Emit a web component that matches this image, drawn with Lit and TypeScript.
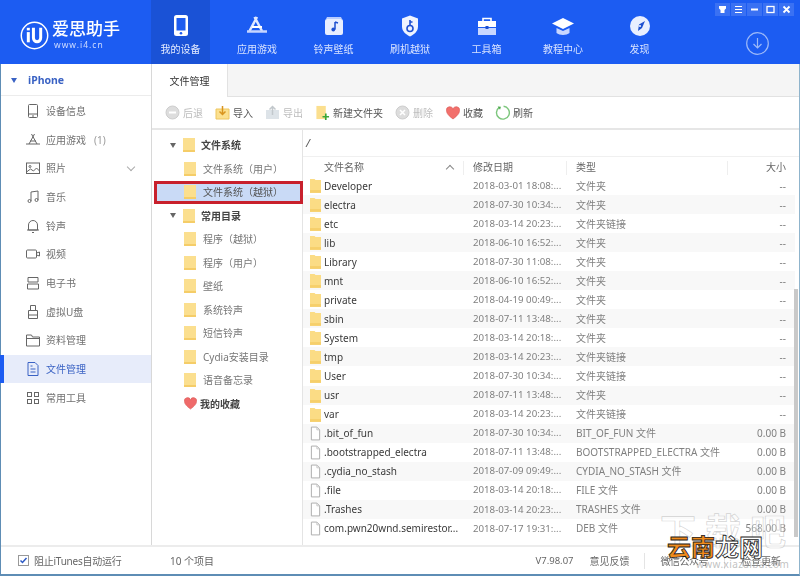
import { LitElement, html, css, svg } from "lit";
import { customElement } from "lit/decorators.js";

const folder = html`<svg class="fi" viewBox="0 0 12 16"><path d="M0 1h5l1 1h6v14H0z" fill="#fbdc85"/><path d="M0 13h12v3H0z" fill="#f6cf6b"/></svg>`;
const folderB = html`<svg class="tf" viewBox="0 0 12 14"><rect width="12" height="14" fill="#fbdf8f"/><rect y="12" width="12" height="2" fill="#f5cd68"/></svg>`;
const fileI = html`<svg class="fi" viewBox="0 0 12 16"><path d="M1.500 1h6l3 3v11h-9z" fill="#fff" stroke="#a9a9a9"/><path d="M7.500 1v3h3" fill="none" stroke="#c4c4c4"/></svg>`;
const heart = (c: string, w = 14) => html`<svg width=${w} height=${w} viewBox="0 0 14 14"><path d="M7 13C3 10 .5 7.600 .5 4.700A3.300 3.300 0 0 1 7 3.300a3.300 3.300 0 0 1 6.500 1.400C13.500 7.600 11 10 7 13z" fill=${c} stroke="#d9534f" stroke-width=".6"/></svg>`;

const navIcons: Record<string, unknown> = {
  phone: svg`<rect x="6" y="1" width="14" height="21" rx="2.500" fill="#fff"/><rect x="8.500" y="4" width="9" height="12.500" fill="#1d5cf0"/><circle cx="13" cy="19.200" r="1.300" fill="#1d5cf0"/>`,
  app: svg`<path d="M13 3l-7.500 14M10.500 3l7.500 14" stroke="#dfe8ff" stroke-width="2.500" fill="none"/><path d="M3 17.500h20" stroke="#c6d5ff" stroke-width="2.500"/><path d="M8 13h10" stroke="#fff" stroke-width="2"/>`,
  music: svg`<path d="M6 3h14l1 2H5z" fill="#b9ccff"/><rect x="4" y="5" width="18" height="16" rx="2" fill="#e8eeff"/><path d="M14 8v7.500M14 8l3 1" stroke="#1d4fd0" stroke-width="1.500" fill="none"/><circle cx="12.300" cy="15.500" r="1.900" fill="#1d4fd0"/>`,
  shield: svg`<path d="M13 1.500l8 3v8c0 5-4 8-8 10-4-2-8-5-8-10v-8z" fill="#eef3ff"/><circle cx="13" cy="14.500" r="3" fill="none" stroke="#1d4fd0" stroke-width="1.600"/><path d="M13 11.500V6M13 8h2.500" stroke="#1d4fd0" stroke-width="1.600"/>`,
  box: svg`<path d="M9 7V4.500h8V7" fill="none" stroke="#fff" stroke-width="1.600"/><path d="M4 7h18v6H4z" fill="#fff"/><path d="M4 14h18v7H4z" fill="#c8d7ff"/><rect x="11.500" y="12" width="3" height="3" fill="#1d4fd0"/>`,
  hat: svg`<path d="M13 4L2 9.500 13 15l11-5.500z" fill="#fff"/><path d="M6.500 14v5c3 2.500 10 2.500 13 0v-5L13 17z" fill="#c8d7ff"/>`,
  compass: svg`<circle cx="13" cy="12" r="10" fill="#e9efff"/><path d="M18 7l-3 7-4 3 1-6.500z" fill="#1d4fd0"/><circle cx="13" cy="12" r="1.100" fill="#e9efff"/>`,
};
const nav = [
  ["phone", "我的设备"], ["app", "应用游戏"], ["music", "铃声壁纸"], ["shield", "刷机越狱"],
  ["box", "工具箱"], ["hat", "教程中心"], ["compass", "发现"],
];

const g = (s: unknown) => html`<svg class="si" viewBox="0 0 16 16" fill="none" stroke="currentColor" stroke-width="1">${s}</svg>`;
const side: [string, unknown, string?][] = [
  ["设备信息", g(svg`<rect x="3.500" y="1.500" width="9" height="13" rx="1"/><path d="M3.500 11h9M7 13h2"/>`)],
  ["应用游戏", g(svg`<path d="M9.500 2L4 12M6.500 2L12 12M1 12h14M5 9h6"/>`), "(1)"],
  ["照片", g(svg`<rect x="1.500" y="3" width="13" height="10.500"/><circle cx="5" cy="6.500" r="1"/><path d="M1.500 12l4-3 3 2 3-3 3 3"/>`)],
  ["音乐", g(svg`<path d="M6 12V3l7-1v9"/><circle cx="4.500" cy="12" r="1.500"/><circle cx="11.500" cy="11" r="1.500"/>`)],
  ["铃声", g(svg`<path d="M3.500 12V7a4.500 4.500 0 0 1 9 0v5zM2 12h12M7 14.500h2"/>`)],
  ["视频", g(svg`<rect x="1.500" y="4" width="10" height="8" rx="1"/><path d="M11.500 7l3-1v4l-3-1"/>`)],
  ["电子书", g(svg`<path d="M3 2.500h10v4.500H3zM2.500 9h11v5h-11z"/>`)],
  ["虚拟U盘", g(svg`<path d="M5.500 1.500h5v5h-5zM3.500 6.500h9v8h-9zM3.500 11h9"/>`)],
  ["资料管理", g(svg`<path d="M1.500 3h5l1 2h7v9h-13zM1.500 6.500h13"/>`)],
  ["文件管理", g(svg`<path d="M3 1.500h7l3 3v10H3zM5.500 8h5M5.500 11h5M5.500 5h2"/>`)],
  ["常用工具", g(svg`<rect x="2.500" y="2.500" width="4" height="4"/><rect x="9.500" y="2.500" width="4" height="4"/><rect x="2.500" y="9.500" width="4" height="4"/><rect x="9.500" y="9.500" width="4" height="4"/>`)],
];

const tree: [string, number, boolean?][] = [
  ["文件系统", 0, true], ["文件系统（用户）", 1], ["文件系统（越狱）", 2], ["常用目录", 0, true],
  ["程序（越狱）", 1], ["程序（用户）", 1], ["壁纸", 1], ["系统铃声", 1], ["短信铃声", 1],
  ["Cydia安装目录", 1], ["语音备忘录", 1],
];

const rows: [string, string, string, string, boolean][] = [
  ["Developer", "2018-03-01 18:08:...", "文件夹", "--", true],
  ["electra", "2018-07-30 10:34:...", "文件夹", "--", true],
  ["etc", "2018-03-14 20:23:...", "文件夹链接", "--", true],
  ["lib", "2018-06-10 16:52:...", "文件夹", "--", true],
  ["Library", "2018-07-30 11:08:...", "文件夹", "--", true],
  ["mnt", "2018-06-10 16:52:...", "文件夹", "--", true],
  ["private", "2018-04-19 00:49:...", "文件夹", "--", true],
  ["sbin", "2018-07-11 13:48:...", "文件夹", "--", true],
  ["System", "2018-03-14 20:18:...", "文件夹", "--", true],
  ["tmp", "2018-03-14 20:23:...", "文件夹链接", "--", true],
  ["User", "2018-07-30 10:34:...", "文件夹链接", "--", true],
  ["usr", "2018-07-11 13:48:...", "文件夹", "--", true],
  ["var", "2018-03-14 20:23:...", "文件夹链接", "--", true],
  [".bit_of_fun", "2018-07-30 10:34:...", "BIT_OF_FUN 文件", "0.00 B", false],
  [".bootstrapped_electra", "2018-07-11 13:48:...", "BOOTSTRAPPED_ELECTRA 文件", "0.00 B", false],
  [".cydia_no_stash", "2018-07-09 09:49:...", "CYDIA_NO_STASH 文件", "0.00 B", false],
  [".file", "2018-03-14 20:18:...", "FILE 文件", "0.00 B", false],
  [".Trashes", "2018-03-14 20:23:...", "TRASHES 文件", "0.00 B", false],
  ["com.pwn20wnd.semirestor...", "2018-07-17 19:31:...", "DEB 文件", "568.00 B", false],
];

@customElement("app-root")
export class AppRoot extends LitElement {
  static styles = css`
    :host { display: block; width: 800px; height: 576px; overflow: hidden; position: relative; background: #fff; color: #666;
      font: 10px/1.2 "Noto Sans", "Noto Sans CJK SC", sans-serif; box-sizing: border-box; }
    * { box-sizing: border-box; }
    .app { height: 576px; display: flex; flex-direction: column; border-left: 1px solid #5e8db5; border-bottom: 2px solid #5e8db5; border-right: 1px solid #8fb4cc; filter: blur(.3px); }
    header { height: 64px; flex: none; background: #1c5cf2; display: flex; position: relative; margin-left: -1px; margin-right: -1px; }
    .logo { width: 151px; display: flex; align-items: center; gap: 3px; padding: 6px 0 0 20px; color: #fff; flex: none; }
    .logo b { display: block; font-size: 17px; font-weight: 500; line-height: 20px; }
    .logo small { display: block; font-size: 8.500px; letter-spacing: 1px; color: #cfdcff; line-height: 12px; padding-left: 2px; }
    .nav { width: 59px; flex: none; margin-right: 17.500px; display: flex; flex-direction: column; align-items: center; padding-top: 13px; color: #d7e2ff; font-size: 10px; }
    .nav svg { width: 26px; height: 26px; margin-bottom: 4px; }
    .nav.on { background: #1a52d6; color: #e5ecff; }
    .dl { position: absolute; left: 746px; top: 32px; }
    .wc { position: absolute; top: 3px; left: 715px; display: flex; gap: 1px; }
    .wc span { width: 15px; height: 13px; background: #3a71f3; display: flex; align-items: center; justify-content: center; }
    .main { flex: 1; display: flex; min-height: 0; }
    aside { width: 151px; flex: none; border-right: 1px solid #d8d8d8; display: flex; flex-direction: column; }
    .dev { height: 32px; flex: none; border-bottom: 1px solid #ececec; display: flex; align-items: center; padding: 2px 0 0 10px; gap: 11px; color: #3a62c4; font-weight: 700; font-size: 10.500px; }
    .tri { width: 0; height: 0; border: 3.500px solid transparent; border-top: 5px solid currentColor; border-bottom: 0; flex: none; }
    .items { padding-top: .5px; }
    .it { height: 28.700px; display: flex; align-items: center; padding-left: 24px; gap: 5px; position: relative; color: #707070; }
    .si { width: 16px; height: 16px; color: #666; flex: none; }
    .it .n { margin-left: 3px; color: #999; }
    .it.on { background: #e7ecfa; color: #3a62c4; }
    .it.on .si { color: #3a62c4; }
    .it.on::before { content: ""; position: absolute; left: -1px; top: 0; bottom: 0; width: 4px; background: #1c5cf2; }
    .chev { position: absolute; left: 127px; top: 10px; width: 6px; height: 6px; border-right: 1px solid #aaa; border-bottom: 1px solid #aaa; transform: rotate(45deg); }
    .content { flex: 1; min-width: 0; display: flex; flex-direction: column; }
    .tabs { height: 33px; flex: none; background: #f5f5f5; border-bottom: 1px solid #e2e2e2; display: flex; }
    .tab { width: 76px; background: #fff; border-right: 1px solid #e2e2e2; margin-bottom: -1px; display: flex; align-items: center; justify-content: center; color: #333; }
    .bar { height: 33px; flex: none; border-bottom: 2px solid #e6e6e6; display: flex; align-items: center; padding-left: 13px; color: #555; }
    .b { display: flex; align-items: center; gap: 3px; margin-right: 12px; }
    .b.off { color: #bdbdbd; }
    .ic { width: 15px; height: 15px; flex: none; display: flex; align-items: center; justify-content: center; }
    .split { flex: 1; display: flex; min-height: 0; }
    .tree { width: 151px; flex: none; border-right: 1px solid #e4e4e4; padding-top: 3.500px; }
    .t { height: 23.500px; display: flex; align-items: center; color: #777; position: relative; }
    .t.top { padding-left: 18px; color: #444; font-weight: 700; }
    .t.top .tri { color: #666; margin-right: 7px; }
    .t.l1 { padding-left: 32px; }
    .t.l2 { margin: 0 -1px 0 2px; padding-left: 30px; background: #c9daf6; outline: 3px solid #c8202c; outline-offset: -3px; color: #555; z-index: 1; }
    .t.heart { padding-left: 32px; }
    .heart span { margin-left: 3px; }
    .tf { width: 12px; height: 14px; margin-right: 6px; flex: none; }
    .t.l1 .tf, .t.l2 .tf { margin-right: 7px; }
    .list { flex: 1; min-width: 0; display: flex; flex-direction: column; }
    .path { height: 27px; flex: none; padding: 6px 0 0 3px; border-bottom: 1px solid #f0f0f0; color: #555; font-style: italic; font-size: 11px; }
    .grid { display: grid; grid-template-columns: 162px 103px 1fr 66px; margin-right: 4px; }
    .head { height: 19px; align-items: center; color: #666; }
    .head div { padding-left: 21px; position: relative; }
    .head div:nth-child(2) { padding-left: 8px; }
    .head div:nth-child(3) { padding-left: 8px; }
    .head div:nth-child(4) { text-align: right; padding-right: 9px; }
    .head div:not(:last-child)::after { content: ""; position: absolute; right: 1px; top: 0; height: 14px; width: 1px; background: #eee; }
    .up { position: absolute; right: 12px; top: 5px; width: 6px; height: 6px; border-left: 1px solid #888; border-top: 1px solid #888; transform: rotate(45deg); }
    .r { height: 19.060px; align-items: center; }
    .r:nth-child(even) { background: #f8f8f8; }
    .r .c1 { display: flex; align-items: center; gap: 3px; padding-left: 7px; color: #3a3a3a; font-size: 10px; white-space: nowrap; }
    .fi { width: 11px; height: 15px; flex: none; }
    .r .c2 { padding-left: 8px; color: #808080; white-space: nowrap; font-size: 9.700px; }
    .r .c3 { padding-left: 8px; color: #808080; white-space: nowrap; }
    .r .c4 { text-align: right; padding-right: 9px; color: #808080; }
    .rows { flex: 1; min-height: 0; position: relative; }
    .sb { position: absolute; right: 1px; top: 113px; width: 4px; height: 248px; background: #c9c9c9; }
    footer { height: 29px; flex: none; border-top: 2px solid #ececec; display: flex; align-items: center; color: #666; position: relative; }
    .chk { margin-left: 17px; width: 11px; height: 11px; border: 1px solid #999; display: flex; align-items: center; justify-content: center; margin-right: 5px; }
    .fs { width: 136px; letter-spacing: -.25px; }
    .v { margin-left: auto; display: flex; gap: 16px; align-items: center; padding-right: 18px; }
    .v span:first-child { font-size: 9.500px; }
    .v i { width: 1px; height: 16px; background: #e4e4e4; }
    .v .d1 { margin-left: -2px; }
    .wx { letter-spacing: -.5px; }
    .mark { position: absolute; left: 667px; top: 532px; font: 700 24px/28px "Noto Sans CJK SC", sans-serif; color: #f08a1c; -webkit-text-stroke: .8px #1a1a1a; white-space: nowrap; }
    .mark em { font-style: normal; color: #fff; }
    .ghost { position: absolute; left: 660px; top: 509px; font: 700 36px/40px "Noto Sans CJK SC", sans-serif; color: rgba(255,255,255,.35); -webkit-text-stroke: .7px rgba(170,170,170,.5); letter-spacing: 9px; white-space: nowrap; }
    .ghost2 { position: absolute; left: 696px; top: 558px; font: 10px/12px "Noto Sans", sans-serif; color: rgba(140,140,140,.55); letter-spacing: .4px; white-space: nowrap; }
  `;

  render() {
    return html`<div class="app">
      <header>
        <div class="logo">
          <svg width="29" height="29" viewBox="0 0 34 34"><circle cx="17" cy="17" r="15.500" fill="none" stroke="#fff" stroke-width="1.700"/><rect x="8" y="13" width="3.500" height="12" fill="#fff"/><rect x="8" y="8" width="3.500" height="3" fill="#fff"/><path d="M14 8v12a6 6 0 0 0 12 0V8h-3.500v12a2.500 2.500 0 0 1-5 0V8z" fill="#fff"/></svg>
          <div><b>爱思助手</b><small>www.i4.cn</small></div>
        </div>
        ${nav.map(([k, t], i) => html`<div class="nav ${i === 0 ? "on" : ""}"><svg viewBox="0 0 26 24">${navIcons[k]}</svg>${t}</div>`)}
        <svg class="dl" width="23" height="23" viewBox="0 0 23 23" fill="none" stroke="#9db9f8" stroke-width="1.200"><circle cx="11.500" cy="11.500" r="10.800"/><path d="M11.500 6v10M7.500 12l4 4 4-4"/></svg>
        <div class="wc">
          <span><svg width="9" height="9" viewBox="0 0 9 9"><path d="M1 1h7v2.500L6.500 5v3h-4V5L1 3.500z" fill="#fff"/></svg></span>
          <span><svg width="9" height="9" viewBox="0 0 9 9" stroke="#fff"><path d="M1 1.500h7M1 4.500h7M1 7.500h7"/></svg></span>
          <span><svg width="9" height="9" viewBox="0 0 9 9"><path d="M1 3.500h7v2H1z" fill="#fff"/></svg></span>
          <span><svg width="9" height="9" viewBox="0 0 9 9" fill="none" stroke="#fff" stroke-width="1.300"><rect x="1" y="1.500" width="7" height="6"/></svg></span>
          <span><svg width="9" height="9" viewBox="0 0 9 9" stroke="#fff" stroke-width="1.800"><path d="M1.500 1.500l6 6M7.500 1.500l-6 6"/></svg></span>
        </div>
      </header>
      <div class="main">
        <aside>
          <div class="dev"><span class="tri"></span>iPhone</div>
          <div class="items">
            ${side.map(([t, ic, n]) => html`<div class="it ${t === "文件管理" ? "on" : ""}">${ic}<span>${t}</span>${n ? html`<span class="n">${n}</span>` : ""}${t === "照片" ? html`<span class="chev"></span>` : ""}</div>`)}
          </div>
        </aside>
        <div class="content">
          <div class="tabs"><div class="tab">文件管理</div></div>
          <div class="bar">
            <div class="b off"><svg class="ic" viewBox="0 0 15 15"><circle cx="7.500" cy="7.500" r="6.500" fill="#ddd" stroke="#ccc"/><path d="M4 7.500h7" stroke="#fff" stroke-width="2"/></svg>后退</div>
            <div class="b"><svg class="ic" viewBox="0 0 15 15"><path d="M1 4h13v10H1z" fill="#fbe08f" stroke="#eec65f"/><path d="M7.500 1v8M4.500 6.500l3 3 3-3" fill="none" stroke="#d9941f" stroke-width="1.500"/></svg>导入</div>
            <div class="b off"><svg class="ic" viewBox="0 0 15 15"><path d="M1 5h13v9H1z" fill="#dde3e8"/><path d="M7.500 10V2M4.500 4.500l3-3 3 3" fill="none" stroke="#c2c8cc" stroke-width="1.500"/></svg>导出</div>
            <div class="b"><svg class="ic" viewBox="0 0 15 16"><path d="M1 1h10v14H1z" fill="#fbdf8f"/><path d="M7.500 12.500h7M11 9v7" stroke="#3aa63a" stroke-width="1.800"/></svg>新建文件夹</div>
            <div class="b off"><svg class="ic" viewBox="0 0 15 15"><circle cx="7.500" cy="7.500" r="6.500" fill="#ddd" stroke="#ccc"/><path d="M5 5l5 5M10 5l-5 5" stroke="#fff" stroke-width="1.500"/></svg>删除</div>
            <div class="b"><span class="ic">${heart("#f2706c")}</span>收藏</div>
            <div class="b"><svg class="ic" viewBox="0 0 14 14" fill="none"><path d="M4 2.200A6 6 0 1 0 8 1.200" stroke="#7cc67c" stroke-width="1.300"/><path d="M2.500 1.500l3 .2-.8 2.800z" fill="#4aa84a"/></svg>刷新</div>
          </div>
          <div class="split">
            <div class="tree">
              ${tree.map(([t, l, caret]) => html`<div class="t ${l === 0 ? "top" : l === 1 ? "l1" : "l2"}">${caret ? html`<span class="tri"></span>` : ""}${folderB}${t}</div>`)}
              <div class="t top heart">${heart("#ef6a6a", 13)}<span>我的收藏</span></div>
            </div>
            <div class="list">
              <div class="path">/</div>
              <div class="grid head">
                <div>文件名称<span class="up"></span></div><div>修改日期</div><div>类型</div><div>大小</div>
              </div>
              <div class="rows">
                ${rows.map(([n, d, ty, s, isDir]) => html`<div class="grid r">
                  <div class="c1">${isDir ? folder : fileI}${n}</div><div class="c2">${d}</div><div class="c3">${ty}</div><div class="c4">${s}</div>
                </div>`)}
                <div class="sb"></div>
              </div>
            </div>
          </div>
        </div>
      </div>
      <footer>
        <span class="chk"><svg width="9" height="9" viewBox="0 0 9 9"><path d="M1.500 4.500l2 2 4-4.500" fill="none" stroke="#2b58c4" stroke-width="1.500"/></svg></span>
        <span class="fs">阻止iTunes自动运行</span>
        <span>10 个项目</span>
        <div class="v"><span>V7.98.07</span><span>意见反馈</span><i class="d1"></i><span class="wx">微信公众号</span><i></i><span>检查更新</span></div>
      </footer>
    </div>
    <div class="ghost">下载吧</div>
    <div class="ghost2">www.xiazaiba.com</div>
    <div class="mark">云南<em>龙网</em></div>`;
  }
}
